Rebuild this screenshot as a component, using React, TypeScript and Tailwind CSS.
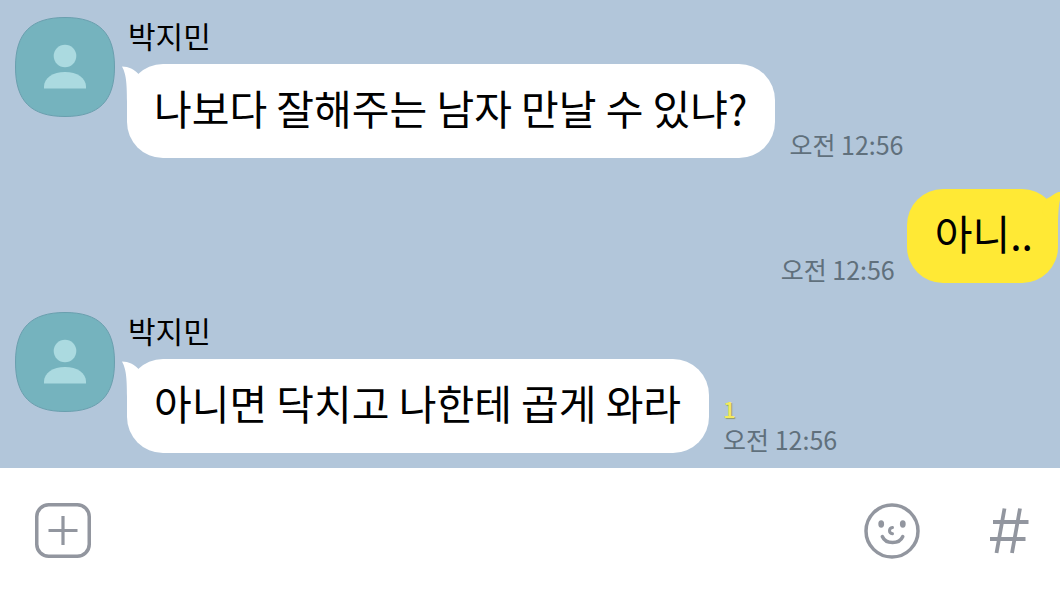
import type { ReactNode } from 'react';

type Message = {
  id: number;
  mine: boolean;
  sender: string;
  text: string;
  time: string;
  unread?: number;
};

const messages: Message[] = [
  { id: 1, mine: false, sender: '박지민', text: '나보다 잘해주는 남자 만날 수 있냐?', time: '오전 12:56' },
  { id: 2, mine: true, sender: '나', text: '아니..', time: '오전 12:56' },
  { id: 3, mine: false, sender: '박지민', text: '아니면 닥치고 나한테 곱게 와라', time: '오전 12:56', unread: 1 },
];

function Avatar() {
  return (
    <svg className="size-[100px] shrink-0" viewBox="0 0 100 100" aria-hidden="true">
      <path
        d="M50 .5C84 .5 99.500 16 99.500 50S84 99.500 50 99.500.5 84 .5 50 16 .5 50 .5Z"
        fill="#75b3be"
        stroke="#6a9fae"
      />
      <circle cx="50" cy="39" r="11.300" fill="#abdae0" />
      <path d="M29 71.500v-2C29 61 38 55 50 55s21 6 21 14.500v2Z" fill="#abdae0" />
    </svg>
  );
}

function Bubble({ mine, children }: { mine: boolean; children: ReactNode }) {
  return (
    <div
      className={
        mine
          ? 'relative rounded-[36px] bg-[#ffe935] pt-3 pr-[25px] pb-5 pl-7'
          : 'relative rounded-[36px] bg-white pt-3 pr-7 pb-5 pl-[27px]'
      }
    >
      {mine ? (
        <svg className="absolute top-0 -right-1.5 h-10 w-6" viewBox="0 0 24 40" aria-hidden="true">
          <path d="M7 9.500C12 8 15 2.500 23 2.500C20 8 18 16 18 38L2 24Z" fill="#ffe935" />
        </svg>
      ) : (
        <svg className="absolute top-0 -left-1.5 h-10 w-6" viewBox="0 0 24 40" aria-hidden="true">
          <path d="M1 2.500C8 2.500 13 5.500 17 9.500L22 24L6 38C6 18 5 10 1 2.500Z" fill="#fff" />
        </svg>
      )}
      <p className="relative text-[41px] leading-[62px] text-black">{children}</p>
    </div>
  );
}

function Meta({ time, unread }: { time: string; unread?: number }) {
  return (
    <div className="shrink-0 text-[25px] leading-7 text-[#60707c]">
      {unread ? (
        <span className="block text-[22px] leading-[34px] font-medium text-[#f4ea5c] [text-shadow:1px_1px_1px_#8f9a6a]">
          {unread}
        </span>
      ) : null}
      <time className="block">{time}</time>
    </div>
  );
}

function MessageRow({ message }: { message: Message }) {
  if (message.mine) {
    return (
      <li className="mt-[31px] mb-[29px] flex items-end justify-end gap-3 pr-0.5">
        <Meta time={message.time} />
        <Bubble mine>{message.text}</Bubble>
      </li>
    );
  }
  return (
    <li className="flex gap-3 pl-[15px]">
      <Avatar />
      <div>
        <h2 className="h-[47px] pl-px text-3xl leading-9 text-black">{message.sender}</h2>
        <div className="flex items-end gap-3.5">
          <Bubble mine={false}>{message.text}</Bubble>
          <Meta time={message.time} unread={message.unread} />
        </div>
      </div>
    </li>
  );
}

function PlusIcon() {
  return (
    <svg className="size-14" viewBox="0 0 56 56" fill="none" stroke="#92969f" aria-hidden="true">
      <rect x="1.750" y="1.750" width="52.500" height="51.500" rx="12" strokeWidth="3.500" />
      <path d="M28 13v29M13.500 27.500h29" strokeWidth="3.200" />
    </svg>
  );
}

function SmileIcon() {
  return (
    <svg className="size-14" viewBox="0 0 56 56" fill="none" stroke="#92969f" strokeLinecap="round" aria-hidden="true">
      <circle cx="28" cy="28" r="26" strokeWidth="3.500" />
      <ellipse cx="17.200" cy="21" rx="2.900" ry="3.700" fill="#92969f" stroke="none" />
      <ellipse cx="38.800" cy="21" rx="2.900" ry="3.700" fill="#92969f" stroke="none" />
      <path d="M28.500 24.500c-4 .8-4 5.500 0 6.300" strokeWidth="3" />
      <path d="M18.300 33.500c3.500 8 17 8 20.500 0" strokeWidth="3.500" />
    </svg>
  );
}

function HashIcon() {
  return (
    <svg className="h-14 w-10" viewBox="0 0 40 56" fill="none" stroke="#92969f" strokeWidth="3.800" aria-hidden="true">
      <path d="M15.500 5.500L7.500 50M31 5.500L23 50M4 19h35.500M1 36h35.500" />
    </svg>
  );
}

export default function App() {
  return (
    <div className="flex min-h-screen flex-col overflow-x-hidden bg-white font-['Noto_Sans_CJK_KR',sans-serif] whitespace-nowrap">
      <main className="bg-[#b2c6da] pt-[17px] pb-[15px]">
        <ol>
          {messages.map((message) => (
            <MessageRow key={message.id} message={message} />
          ))}
        </ol>
      </main>
      <footer className="flex flex-1 items-center justify-between pr-[31px] pl-[35px]">
        <button type="button" aria-label="첨부">
          <PlusIcon />
        </button>
        <div className="flex items-center gap-[69px]">
          <button type="button" aria-label="이모티콘">
            <SmileIcon />
          </button>
          <button type="button" aria-label="샵 검색">
            <HashIcon />
          </button>
        </div>
      </footer>
    </div>
  );
}
